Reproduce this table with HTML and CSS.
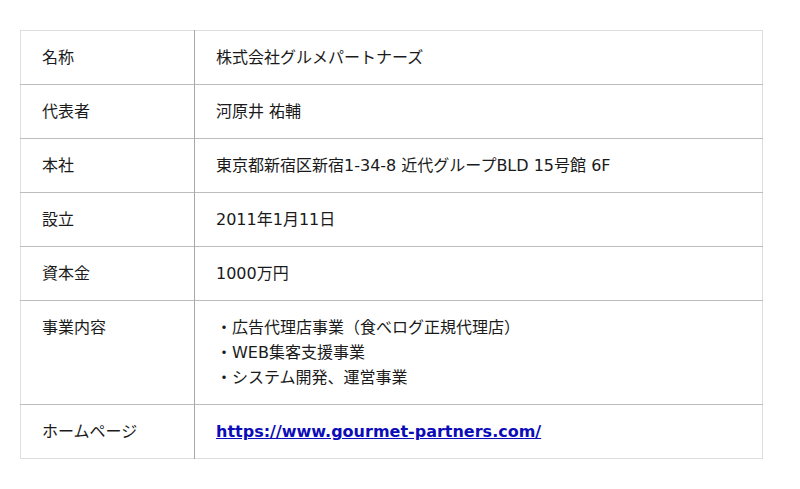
FILE: index.html
```html
<!DOCTYPE html>
<html lang="ja">
<head>
<meta charset="utf-8">
<title>会社概要</title>
<link rel="stylesheet" href="styles.css">
</head>
<body>
<div class="page">
  <table class="info">
    <tbody>
      <tr><th>名称</th><td>株式会社グルメパートナーズ</td></tr>
      <tr><th>代表者</th><td>河原井 祐輔</td></tr>
      <tr><th>本社</th><td>東京都新宿区新宿1-34-8 近代グループBLD 15号館 6F</td></tr>
      <tr><th>設立</th><td>2011年1月11日</td></tr>
      <tr><th>資本金</th><td>1000万円</td></tr>
      <tr><th>事業内容</th><td>・広告代理店事業（食べログ正規代理店）<br>・WEB集客支援事業<br>・システム開発、運営事業</td></tr>
      <tr><th>ホームページ</th><td><a class="link" href="#">https://www.gourmet-partners.com/</a></td></tr>
    </tbody>
  </table>
</div>
</body>
</html>
```
FILE: styles.css
```css
html, body {
  margin: 0;
  padding: 0;
  background: #fff;
}
.page {
  padding: 30px 20px;
  font-family: "DejaVu Sans", "Noto Sans CJK JP", sans-serif;
  font-size: 16px;
  color: #1a1a1a;
}
.info {
  width: 743px;
  border-collapse: collapse;
  border: 1px solid #dedede;
}
.info th,
.info td {
  text-align: left;
  vertical-align: top;
  font-weight: normal;
  line-height: 25px;
  padding: 14px 21px;
}
.info tr + tr th,
.info tr + tr td {
  border-top: 1px solid #bdbdbd;
}
.info th {
  width: 131px;
  border-right: 1px solid #a8a8a8;
}
.link {
  color: #0c0cb8;
  font-weight: bold;
  text-decoration: underline;
}
```
